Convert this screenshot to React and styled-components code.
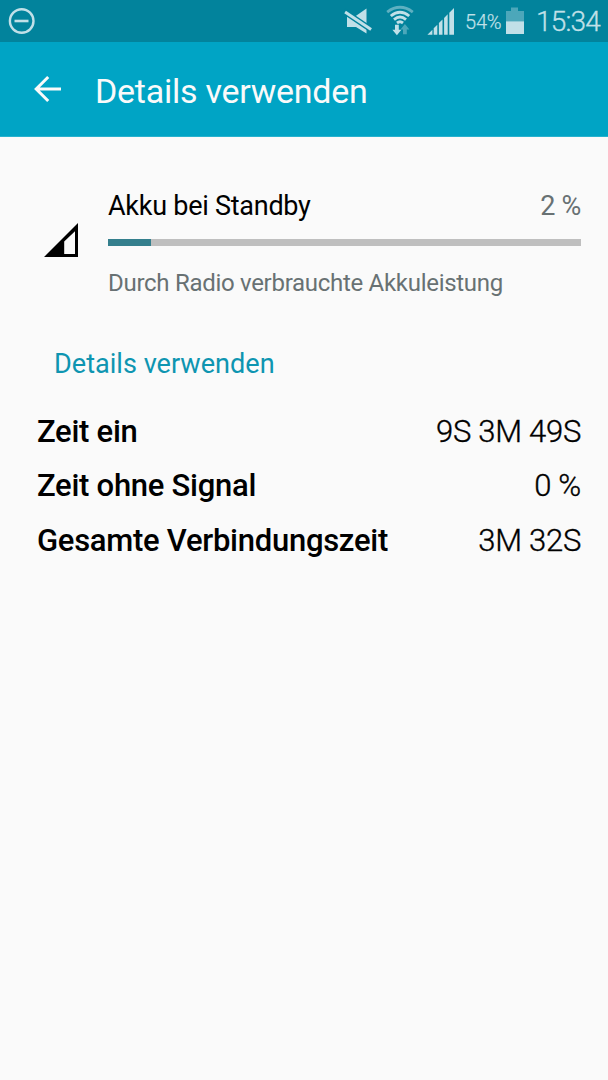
import React from "react";
import styled, { createGlobalStyle } from "styled-components";

const GlobalStyle = createGlobalStyle`
  *, *::before, *::after { box-sizing: border-box; }
  body { margin: 0; background: #fafafa; font-family: Roboto, "Liberation Sans", sans-serif; }
`;

const Screen = styled.div`
  width: 608px;
  height: 1080px;
  background: #fafafa;
  color: #000;
  overflow: hidden;
`;

const StatusBar = styled.div`
  display: flex;
  align-items: flex-start;
  justify-content: space-between;
  height: 42px;
  padding: 0 8px;
  background: #02839c;
  color: #c1e0e8;
`;

const StatusGroup = styled.div`
  display: flex;
  height: 42px;
`;

const Glyph = styled.svg`
  display: block;
  flex: none;
  width: ${(p) => p.$w}px;
  height: 42px;
  margin-left: ${(p) => p.$gap || 0}px;
`;

const BatteryLevel = styled.span`
  width: 37px;
  margin-left: 10px;
  font-size: 20px;
  font-weight: 300;
  line-height: 44px;
  letter-spacing: -0.2px;
  -webkit-text-stroke: 0.2px currentColor;
  white-space: nowrap;
`;

const Clock = styled.span`
  width: 64px;
  margin-left: 12px;
  font-size: 28px;
  font-weight: 300;
  line-height: 44px;
  letter-spacing: -0.8px;
  -webkit-text-stroke: 0.3px currentColor;
  white-space: nowrap;
`;

const AppBar = styled.header`
  display: flex;
  align-items: center;
  height: 95px;
  padding-left: 33px;
  background: #00a4c5;
  border-bottom: 1px solid #27b2ce;
  color: #fafafa;
`;

const BackButton = styled.button`
  display: flex;
  padding: 0;
  border: 0;
  background: none;
  color: inherit;
`;

const Title = styled.h1`
  margin: 3px 0 0 33px;
  font-size: 34px;
  font-weight: 400;
  letter-spacing: -0.26px;
  line-height: 40px;
  white-space: nowrap;
`;

const Usage = styled.section`
  display: flex;
  padding: 48px 27px 0 44px;
`;

const UsageIcon = styled.svg`
  flex: none;
  width: 34px;
  height: 34px;
  margin: 38px 30px 0 0;
`;

const UsageBody = styled.div`
  flex: 1;
`;

const UsageHead = styled.div`
  display: flex;
  justify-content: space-between;
  padding-top: 1px;
  font-size: 27px;
  letter-spacing: -0.26px;
  line-height: 40px;
`;

const Percent = styled.span`
  color: #687173;
`;

const Track = styled.div`
  height: 7px;
  margin-top: 13px;
  background: #bfbfbf;
`;

const Fill = styled.div`
  height: 100%;
  background: #347f8d;
`;

const Description = styled.p`
  margin: 21px 0 1px;
  color: #687173;
  font-size: 24px;
  letter-spacing: -0.29px;
  line-height: 32px;
  white-space: nowrap;
`;

const SectionTitle = styled.h2`
  margin: 44px 0 0 54px;
  color: #0e95b1;
  font-size: 27.1px;
  font-weight: 400;
  line-height: 40px;
  white-space: nowrap;
`;

const Stats = styled.dl`
  margin: 21px 27px 0 37px;
`;

const StatRow = styled.div`
  display: flex;
  justify-content: space-between;
  font-size: 31px;
  letter-spacing: -0.27px;
  line-height: 54.4px;
  white-space: nowrap;
`;

const StatName = styled.dt`
  font-weight: 500;
`;

const StatValue = styled.dd`
  margin: 0;
  font-weight: 300;
  -webkit-text-stroke: 0.35px currentColor;
`;

const STATS = [
  ["Zeit ein", "9S 3M 49S"],
  ["Zeit ohne Signal", "0 %"],
  ["Gesamte Verbindungszeit", "3M 32S"],
];

const USAGE = 9;

export default function App() {
  return (
    <>
      <GlobalStyle />
      <Screen>
        <StatusBar>
          <Glyph $w={27} viewBox="0 0 27 42" fill="none" stroke="#c1e0e8">
            <circle cx="13.7" cy="21" r="11.8" strokeWidth="2.4" />
            <path d="M6.5 21h14" strokeWidth="2.6" />
          </Glyph>
          <StatusGroup>
            <Glyph $w={28} viewBox="0 0 28 42">
              <path d="M3 16.5h8L22.5 8.4v25L12 27H3z" fill="#c1e0e8" />
              <path d="M0 11.2L28 30.2" stroke="#02839c" strokeWidth="5.8" />
              <path d="M1.1 12L27.1 29.6" stroke="#c1e0e8" strokeWidth="3" />
            </Glyph>
            <Glyph $w={28} $gap={14} viewBox="0 0 28 42" fill="none" stroke="#c1e0e8" strokeWidth="2.9">
              <path d="M1.2 12.1Q14 2.6 26.8 12.1" stroke="#5eb0c1" />
              <path d="M4.8 16Q14 8.4 23.2 16" />
              <path d="M8 19.6Q14 14.6 20 19.6" />
              <path d="M11 23Q14 20.6 17 23" />
              <path d="M9 24.7h3.8v5h2.6L10.9 35.2l-4.5-5.5H9z" fill="#c1e0e8" stroke="none" />
              <path d="M17 34.2h3.8v-4.7h2.6L18.9 24l-4.5 5.5H17z" fill="#4ba7ba" stroke="none" />
            </Glyph>
            <Glyph $w={28} $gap={13} viewBox="0 0 28 42" fill="#c1e0e8">
              <path d="M0.4 34.7l5-5v5zM6.7 34.7v-6.4l3.6-3.6v10zM11.9 34.7V23.1l3.6-3.6v15.2zM17.1 34.7V17.9l3.6-3.6v20.4zM22.3 34.7V12.7L27 8v26.7z" />
            </Glyph>
            <BatteryLevel>54%</BatteryLevel>
            <Glyph $w={18} $gap={4} viewBox="0 0 18 42">
              <path d="M0 11h5V7.5h7V11h6v10.5H0z" fill="#4ca7ba" />
              <path d="M0 21.3h18V34H0z" fill="#c1e0e8" />
            </Glyph>
            <Clock>15:34</Clock>
          </StatusGroup>
        </StatusBar>

        <AppBar>
          <BackButton aria-label="Zurück">
            <svg width="29" height="28" viewBox="0 0 29 28" fill="none" stroke="currentColor" strokeWidth="3">
              <path d="M28 14H3.5M15.2 2L3.2 14l12 12" />
            </svg>
          </BackButton>
          <Title>Details verwenden</Title>
        </AppBar>

        <Usage>
          <UsageIcon viewBox="0 0 34 34">
            <path fillRule="evenodd" d="M0 34L34 0v34zM20.2 31H31V8.3L20.2 18.5z" />
          </UsageIcon>
          <UsageBody>
            <UsageHead>
              <span>Akku bei Standby</span>
              <Percent>2 %</Percent>
            </UsageHead>
            <Track>
              <Fill style={{ width: `${USAGE}%` }} />
            </Track>
            <Description>Durch Radio verbrauchte Akkuleistung</Description>
          </UsageBody>
        </Usage>

        <SectionTitle>Details verwenden</SectionTitle>
        <Stats>
          {STATS.map(([name, value]) => (
            <StatRow key={name}>
              <StatName>{name}</StatName>
              <StatValue>{value}</StatValue>
            </StatRow>
          ))}
        </Stats>
      </Screen>
    </>
  );
}
